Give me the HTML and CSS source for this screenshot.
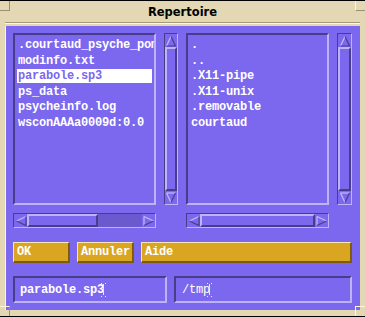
FILE: index.html
```html
<!DOCTYPE html>
<html>
<head>
<meta charset="utf-8">
<link rel="stylesheet" href="styles.css">
</head>
<body>
<div class="window">
  <div class="corner tl"></div>
  <div class="corner tr"></div>
  <div class="corner bl"></div>
  <div class="corner br"></div>
  <div class="titlebar">Repertoire</div>
  <div class="sep"></div>
  <div class="content">
    <div class="top">
      <div class="list">
        <div class="row">.courtaud_psyche_pomme</div>
        <div class="row">modinfo.txt</div>
        <div class="row sel">parabole.sp3</div>
        <div class="row">ps_data</div>
        <div class="row">psycheinfo.log</div>
        <div class="row">wsconAAAa0009d:0.0</div>
      </div>
      <div class="vscroll">
        <div class="arrow"><svg width="12" height="12" viewBox="0 0 12 12"><path d="M1.5 11 L6 1.5" class="lt"/><path d="M6 1.5 L10.5 11 L1.5 11" class="dk"/></svg></div>
        <div class="thumb"></div>
        <div class="arrow"><svg width="12" height="12" viewBox="0 0 12 12"><path d="M1.5 1 L10.5 1" class="lt"/><path d="M1.5 1 L6 10.5" class="lt"/><path d="M6 10.5 L10.5 1" class="dk"/></svg></div>
      </div>
      <div class="list">
        <div class="row">.</div>
        <div class="row">..</div>
        <div class="row">.X11-pipe</div>
        <div class="row">.X11-unix</div>
        <div class="row">.removable</div>
        <div class="row">courtaud</div>
      </div>
      <div class="vscroll">
        <div class="arrow"><svg width="12" height="12" viewBox="0 0 12 12"><path d="M1.5 11 L6 1.5" class="lt"/><path d="M6 1.5 L10.5 11 L1.5 11" class="dk"/></svg></div>
        <div class="thumb"></div>
        <div class="arrow"><svg width="12" height="12" viewBox="0 0 12 12"><path d="M1.5 1 L10.5 1" class="lt"/><path d="M1.5 1 L6 10.5" class="lt"/><path d="M6 10.5 L10.5 1" class="dk"/></svg></div>
      </div>
      <div class="hscroll">
        <div class="harrow"><svg width="12" height="12" viewBox="0 0 12 12"><path d="M11 1.5 L1.5 6" class="lt"/><path d="M1.5 6 L11 10.5 L11 1.5" class="dk"/></svg></div>
        <div class="hthumb part"></div>
        <div class="trough"></div>
        <div class="harrow"><svg width="12" height="12" viewBox="0 0 12 12"><path d="M1 1.5 L1 10.5" class="lt"/><path d="M1 1.5 L10.5 6" class="lt"/><path d="M10.5 6 L1 10.5" class="dk"/></svg></div>
      </div>
      <div class="hscroll second">
        <div class="harrow"><svg width="12" height="12" viewBox="0 0 12 12"><path d="M11 1.5 L1.5 6" class="lt"/><path d="M1.5 6 L11 10.5 L11 1.5" class="dk"/></svg></div>
        <div class="hthumb full"></div>
        <div class="harrow"><svg width="12" height="12" viewBox="0 0 12 12"><path d="M1 1.5 L1 10.5" class="lt"/><path d="M1 1.5 L10.5 6" class="lt"/><path d="M10.5 6 L1 10.5" class="dk"/></svg></div>
      </div>
    </div>
    <div class="buttons">
      <div class="btn small">OK</div>
      <div class="btn small">Annuler</div>
      <div class="btn wide">Aide</div>
    </div>
    <div class="fields">
      <div class="field left"><span class="ftext">parabole.sp3</span><svg class="cursor" width="5" height="14" viewBox="0 0 5 14"><rect x="0" y="0" width="1" height="1"/><rect x="4" y="0" width="1" height="1"/><rect x="2" y="1" width="1" height="11"/><rect x="0" y="13" width="1" height="1"/><rect x="4" y="13" width="1" height="1"/></svg></div>
      <div class="field right"><span class="ftext thin">/tmp</span><svg class="cursor" width="5" height="14" viewBox="0 0 5 14"><rect x="0" y="0" width="1" height="1"/><rect x="4" y="0" width="1" height="1"/><rect x="2" y="1" width="1" height="11"/><rect x="0" y="13" width="1" height="1"/><rect x="4" y="13" width="1" height="1"/></svg></div>
    </div>
  </div>
</div>
</body>
</html>
```

FILE: styles.css
```css
html, body {
  margin: 0;
  padding: 0;
  background: #000;
}
body {
  width: 365px;
  height: 317px;
  overflow: hidden;
}
.window {
  position: relative;
  margin-top: 1px;
  width: 365px;
  height: 315px;
  background: #e4d7b3;
  box-sizing: border-box;
  padding: 0 5px 5px 5px;
}
.corner {
  position: absolute;
  width: 10px;
  height: 10px;
  box-sizing: border-box;
}
.corner.tl { left: 0; top: 0; border-right: 1px solid #9c9070; border-bottom: 1px solid #9c9070; }
.corner.tr { right: 0; top: 0; border-left: 1px solid #fff6dc; border-bottom: 1px solid #9c9070; }
.corner.bl { left: 0; bottom: 0; border-right: 1px solid #9c9070; border-top: 1px solid #fff6dc; }
.corner.br { right: 0; bottom: 0; border-left: 1px solid #fff6dc; border-top: 1px solid #fff6dc; }
.titlebar {
  height: 21px;
  line-height: 22px;
  text-align: center;
  font-family: "DejaVu Sans", sans-serif;
  font-weight: bold;
  font-size: 11.5px;
  color: #000;
}
.sep {
  height: 0;
  border-top: 1px solid #a69a78;
  border-bottom: 1px solid #fff8e4;
  margin-bottom: 2px;
}
.content {
  background: #7b68ee;
  height: 284px;
  box-sizing: border-box;
  padding: 7px 8px 7px 8px;
  border-left: 1px solid #fff3d6;
  font-family: "Liberation Mono", monospace;
  font-weight: bold;
  font-size: 12px;
  letter-spacing: -0.2px;
  color: #fff;
}
.top {
  display: grid;
  grid-template-columns: 143px 14px 143px 15px;
  grid-template-rows: 172px 15px;
  column-gap: 8px;
  row-gap: 8px;
  margin-left: -1px;
}
.list {
  box-sizing: border-box;
  border-style: solid;
  border-width: 2px;
  border-color: #483d8b #bdb3f7 #bdb3f7 #483d8b;
  padding: 3px 2px 0 2px;
  overflow: hidden;
  display: flex;
  flex-direction: column;
  gap: 1.6px;
}
.row {
  height: 14px;
  line-height: 14px;
  padding-left: 1px;
  white-space: nowrap;
}
.row.sel {
  background: #fff;
  color: #7b68ee;
}
.vscroll {
  box-sizing: border-box;
  border: 1px solid;
  border-color: #483d8b #bdb3f7 #bdb3f7 #483d8b;
  background: #6a5acd;
  display: flex;
  flex-direction: column;
}
.arrow {
  height: 13px;
  display: flex;
  justify-content: center;
  align-items: center;
  background: #7b68ee;
}
.harrow {
  width: 13px;
  display: flex;
  justify-content: center;
  align-items: center;
  background: #7b68ee;
}
svg path {
  fill: none;
  stroke-width: 1.2;
}
svg path.lt { stroke: #c4bbf9; }
svg path.dk { stroke: #483d8b; }
.thumb {
  flex: 1;
  box-sizing: border-box;
  border: 2px solid;
  border-color: #bdb3f7 #483d8b #483d8b #bdb3f7;
  background: #7b68ee;
}
.hscroll {
  grid-column: 1;
  box-sizing: border-box;
  border: 1px solid;
  border-color: #483d8b #bdb3f7 #bdb3f7 #483d8b;
  background: #6a5acd;
  display: flex;
}
.hscroll.second {
  grid-column: 3;
}
.hthumb {
  box-sizing: border-box;
  border: 2px solid;
  border-color: #bdb3f7 #483d8b #483d8b #bdb3f7;
  background: #7b68ee;
}
.hthumb.part { width: 71px; }
.hthumb.full { flex: 1; }
.trough { flex: 1; }
.buttons {
  display: flex;
  gap: 7px;
  margin-top: 14px;
  margin-left: -1px;
  height: 21px;
}
.btn {
  box-sizing: border-box;
  height: 21px;
  background: #daa520;
  border-style: solid;
  border-width: 1px 2px 2px 1px;
  border-color: #f6e6b4 #7d5a0c #7d5a0c #f6e6b4;
  line-height: 18px;
  padding-left: 3px;
  white-space: nowrap;
}
.btn.small { width: 57px; }
.btn.wide { width: 211px; }
.fields {
  display: flex;
  gap: 7px;
  margin-top: 13px;
  margin-left: -1px;
}
.field {
  box-sizing: border-box;
  height: 27px;
  border-style: solid;
  border-width: 2px;
  border-color: #483d8b #bdb3f7 #bdb3f7 #483d8b;
  display: flex;
  align-items: center;
  padding-left: 5px;
  padding-top: 1px;
}
.field.left { width: 154px; }
.field.right { width: 178px; padding-left: 6px; }
.ftext { white-space: nowrap; }
.ftext.thin { font-weight: normal; }
.cursor {
  fill: #e8e4ff;
  margin-left: -3px;
}
```
